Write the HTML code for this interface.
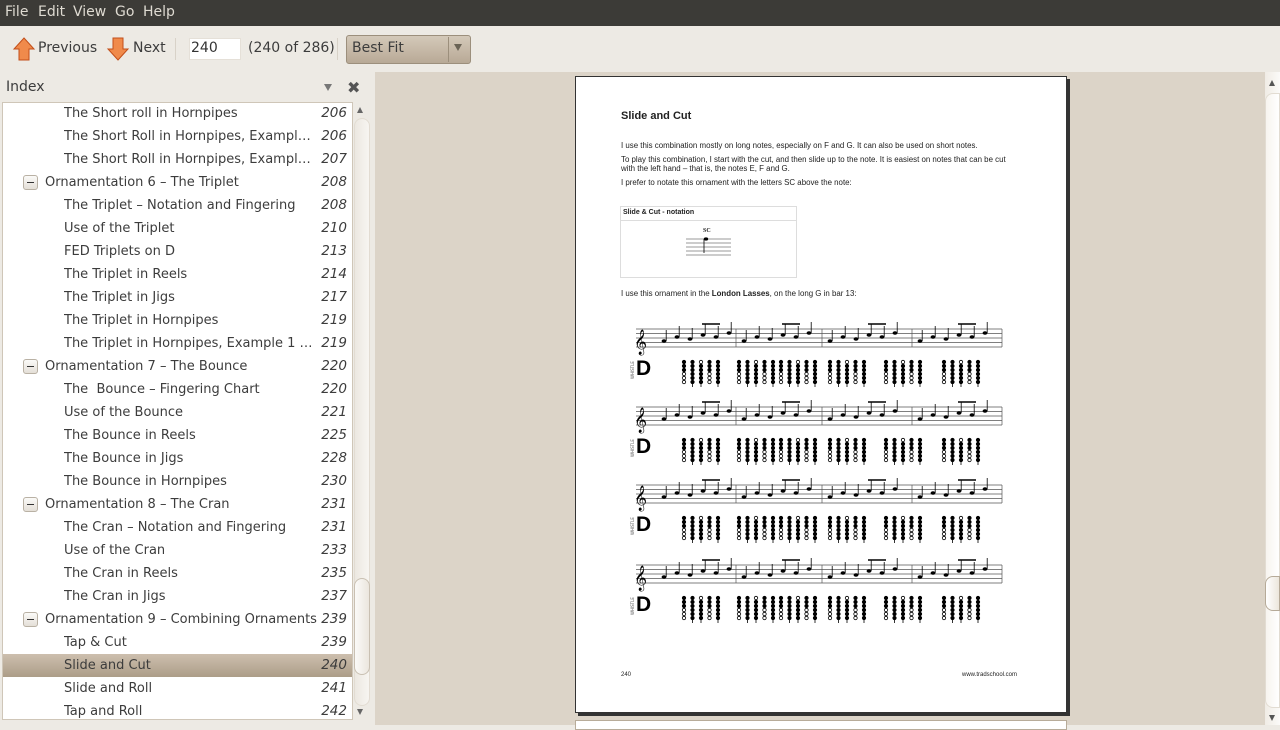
<!DOCTYPE html>
<html><head><meta charset="utf-8"><style>
*{margin:0;padding:0;box-sizing:border-box}
body{width:1280px;height:725px;overflow:hidden;background:#edeae4;font-family:"DejaVu Sans","Liberation Sans",sans-serif;font-size:14px;color:#3c3c3c;position:relative}
.abs{position:absolute}
#menu{left:0;top:0;width:1280px;height:26px;background:#3c3b37;color:#dfdbd2;font-size:14px}
#menu span{position:absolute;top:4px}
.tb{font-size:14px;color:#3c3c3c;top:40px}
#tree{left:2px;top:102px;width:351px;height:618px;background:#fff;border:1px solid #cfc6b8;overflow:hidden}
.row{position:absolute;left:0;width:349px;height:23px;line-height:23px;font-size:13px;color:#3c3c3c}
.row .t{position:absolute;left:61px;white-space:nowrap;max-width:253px;overflow:hidden;text-overflow:ellipsis}
.row.p .t{left:42px;max-width:290px}
.row .n{position:absolute;right:5px;font-style:italic;font-size:13.5px}
.row.sel{background:linear-gradient(#cdbfae,#ac9d88);}
.exp{position:absolute;left:20px;top:4px;width:15px;height:15px;border:1px solid #b9b1a4;border-radius:3px;background:linear-gradient(#fbfaf8,#e4dfd7)}
.exp:after{content:"";position:absolute;left:3px;top:6px;width:7px;height:1px;background:#333}
#doc{left:375px;top:72px;width:890px;height:653px;background:#dcd4c8}
#page{left:575px;top:76px;width:492px;height:637px;background:#fff;border:1px solid #333;box-shadow:3px 3px 0 #333}
.pt{position:absolute;font-family:"Liberation Sans",sans-serif;color:#222}
</style></head><body>
<div id="menu" class="abs"><span style="left:5px">File</span><span style="left:38px">Edit</span><span style="left:73px">View</span><span style="left:115px">Go</span><span style="left:143px">Help</span></div>

<svg class="abs" style="left:12px;top:37px" width="24" height="25"><path d="M12 1 L22 12 H17 V23 H7 V12 H2 Z" fill="#f08a4b" stroke="#c24f1a" stroke-width="1"/></svg>
<div class="abs tb" style="left:38px">Previous</div>
<svg class="abs" style="left:106px;top:37px" width="24" height="25"><path d="M12 23 L22 12 H17 V1 H7 V12 H2 Z" fill="#f08a4b" stroke="#c24f1a" stroke-width="1"/></svg>
<div class="abs tb" style="left:133px">Next</div>
<div class="abs" style="left:175px;top:38px;width:1px;height:22px;background:#d8d2c8"></div>
<div class="abs" style="left:189px;top:38px;width:52px;height:22px;background:#fff;border:1px solid #e5e0d8;padding:1px 0 0 1px;font-size:14px;color:#333">240</div>
<div class="abs tb" style="left:248px">(240 of 286)</div>
<div class="abs" style="left:337px;top:38px;width:1px;height:22px;background:#d8d2c8"></div>
<div class="abs" style="left:346px;top:35px;width:125px;height:29px;border:1px solid #9c8f7c;border-radius:3px;background:linear-gradient(#d4c9b9,#b8a996)"></div>
<div class="abs tb" style="left:352px;top:40px">Best Fit</div>
<div class="abs" style="left:448px;top:37px;width:1px;height:25px;background:#9c8f7c"></div>
<div class="abs" style="left:454px;top:44px;width:0;height:0;border-left:4px solid transparent;border-right:4px solid transparent;border-top:7px solid #6a6355"></div>

<div class="abs" style="left:6px;top:79px;font-size:14px">Index</div>
<div class="abs" style="left:324px;top:84px;border-left:4px solid transparent;border-right:4px solid transparent;border-top:7px solid #777"></div>
<div class="abs" style="left:347px;top:78px;font-size:16px;font-weight:bold;color:#555">✖</div>

<div id="tree" class="abs">
<div class="row" style="top:-1px"><span class="t">The Short roll in Hornpipes</span><span class="n">206</span></div>
<div class="row" style="top:22px"><span class="t">The Short Roll in Hornpipes, Example 1</span><span class="n">206</span></div>
<div class="row" style="top:45px"><span class="t">The Short Roll in Hornpipes, Example 2</span><span class="n">207</span></div>
<div class="row p" style="top:68px"><span class="exp"></span><span class="t">Ornamentation 6 – The Triplet</span><span class="n">208</span></div>
<div class="row" style="top:91px"><span class="t">The Triplet – Notation and Fingering</span><span class="n">208</span></div>
<div class="row" style="top:114px"><span class="t">Use of the Triplet</span><span class="n">210</span></div>
<div class="row" style="top:137px"><span class="t">FED Triplets on D</span><span class="n">213</span></div>
<div class="row" style="top:160px"><span class="t">The Triplet in Reels</span><span class="n">214</span></div>
<div class="row" style="top:183px"><span class="t">The Triplet in Jigs</span><span class="n">217</span></div>
<div class="row" style="top:206px"><span class="t">The Triplet in Hornpipes</span><span class="n">219</span></div>
<div class="row" style="top:229px"><span class="t">The Triplet in Hornpipes, Example 1 and 2</span><span class="n">219</span></div>
<div class="row p" style="top:252px"><span class="exp"></span><span class="t">Ornamentation 7 – The Bounce</span><span class="n">220</span></div>
<div class="row" style="top:275px"><span class="t">The &nbsp;Bounce – Fingering Chart</span><span class="n">220</span></div>
<div class="row" style="top:298px"><span class="t">Use of the Bounce</span><span class="n">221</span></div>
<div class="row" style="top:321px"><span class="t">The Bounce in Reels</span><span class="n">225</span></div>
<div class="row" style="top:344px"><span class="t">The Bounce in Jigs</span><span class="n">228</span></div>
<div class="row" style="top:367px"><span class="t">The Bounce in Hornpipes</span><span class="n">230</span></div>
<div class="row p" style="top:390px"><span class="exp"></span><span class="t">Ornamentation 8 – The Cran</span><span class="n">231</span></div>
<div class="row" style="top:413px"><span class="t">The Cran – Notation and Fingering</span><span class="n">231</span></div>
<div class="row" style="top:436px"><span class="t">Use of the Cran</span><span class="n">233</span></div>
<div class="row" style="top:459px"><span class="t">The Cran in Reels</span><span class="n">235</span></div>
<div class="row" style="top:482px"><span class="t">The Cran in Jigs</span><span class="n">237</span></div>
<div class="row p" style="top:505px"><span class="exp"></span><span class="t">Ornamentation 9 – Combining Ornaments</span><span class="n">239</span></div>
<div class="row" style="top:528px"><span class="t">Tap &amp; Cut</span><span class="n">239</span></div>
<div class="row sel" style="top:551px"><span class="t">Slide and Cut</span><span class="n">240</span></div>
<div class="row" style="top:574px"><span class="t">Slide and Roll</span><span class="n">241</span></div>
<div class="row" style="top:597px"><span class="t">Tap and Roll</span><span class="n">242</span></div>
</div>
<!-- left scrollbar -->
<div class="abs" style="left:357px;top:107px;border-left:3px solid transparent;border-right:3px solid transparent;border-bottom:6px solid #666"></div>
<div class="abs" style="left:354px;top:118px;width:16px;height:588px;border-radius:8px;background:linear-gradient(90deg,#ece8e1,#f7f5f1);border:1px solid #e2dcd2"></div>
<div class="abs" style="left:354px;top:578px;width:16px;height:97px;border-radius:8px;background:linear-gradient(90deg,#fbfaf8,#ebe6de);border:1px solid #c9c0b2"></div>
<div class="abs" style="left:357px;top:709px;border-left:3px solid transparent;border-right:3px solid transparent;border-top:6px solid #666"></div>

<div id="doc" class="abs"></div>
<div class="abs" style="left:1265px;top:72px;width:15px;height:653px;background:linear-gradient(90deg,#f0ece5,#fbfaf8)"></div>
<div class="abs" style="left:1269px;top:80px;border-left:3px solid transparent;border-right:3px solid transparent;border-bottom:6px solid #555"></div>
<div class="abs" style="left:1265px;top:93px;width:15px;height:615px;border-radius:8px 0 0 8px;border:1px solid #e2dcd2;background:linear-gradient(90deg,#f7f4ef,#fff)"></div>
<div class="abs" style="left:1265px;top:576px;width:15px;height:35px;border-radius:8px 0 0 8px;border:1px solid #b6aa98;background:linear-gradient(90deg,#fff,#ece6dc)"></div>
<div class="abs" style="left:1269px;top:715px;border-left:3px solid transparent;border-right:3px solid transparent;border-top:6px solid #555"></div>

<div class="abs" style="left:575px;top:720px;width:492px;height:10px;background:#fff;border:1px solid #b8ac9a"></div>
<div id="page" class="abs">
<div class="pt" style="left:45px;top:33px;font-size:11px;font-weight:bold">Slide and Cut</div>
<div class="pt" style="left:45px;top:64px;font-size:7.9px">I use this combination mostly on long notes, especially on F and G. It can also be used on short notes.</div>
<div class="pt" style="left:45px;top:78px;font-size:7.9px;line-height:9px;width:398px">To play this combination, I start with the cut, and then slide up to the note. It is easiest on notes that can be cut with the left hand – that is, the notes E, F and G.</div>
<div class="pt" style="left:45px;top:101px;font-size:7.9px">I prefer to notate this ornament with the letters SC above the note:</div>
<div class="abs" style="left:44px;top:129px;width:177px;height:72px;border:1px solid #ddd"></div>
<div class="abs" style="left:44px;top:143px;width:177px;height:1px;background:#ddd"></div>
<div class="pt" style="left:47px;top:132px;font-size:7px;font-weight:bold">Slide &amp; Cut - notation</div>
<div class="pt" style="left:127px;top:151px;font-size:6px;font-weight:bold;font-family:'Liberation Serif',serif">SC</div>
<svg class="abs" style="left:110px;top:158px" width="46" height="24"><g stroke="#777" stroke-width="0.8"><line x1="0" y1="4" x2="45" y2="4"/><line x1="0" y1="8" x2="45" y2="8"/><line x1="0" y1="12" x2="45" y2="12"/><line x1="0" y1="16" x2="45" y2="16"/><line x1="0" y1="20" x2="45" y2="20"/></g><ellipse cx="20" cy="4" rx="2.2" ry="1.6" fill="#000"/><line x1="18" y1="4" x2="18" y2="18" stroke="#000" stroke-width="0.8"/></svg>
<div class="pt" style="left:45px;top:212px;font-size:7.9px">I use this ornament in the <b>London Lasses</b>, on the long G in bar 13:</div>

<svg class="abs" style="left:50px;top:240px" width="380" height="320">
<defs>
<g id="c1" stroke="#000" stroke-width="0.8"><circle cx="0" cy="2" r="1.7"/><circle cx="0" cy="6" r="1.7"/><circle cx="0" cy="10" r="1.7"/><circle cx="0" cy="14" r="1.7" fill="#fff"/><circle cx="0" cy="18" r="1.7" fill="#fff"/><circle cx="0" cy="22" r="1.7" fill="#fff"/></g>
<g id="c2" stroke="#000" stroke-width="0.8"><circle cx="0" cy="2" r="1.7"/><circle cx="0" cy="6" r="1.7"/><circle cx="0" cy="10" r="1.7"/><circle cx="0" cy="14" r="1.7"/><circle cx="0" cy="18" r="1.7"/><circle cx="0" cy="22" r="1.7"/><line x1="0" y1="24" x2="0" y2="27"/></g>
<g id="c3" stroke="#000" stroke-width="0.8"><circle cx="0" cy="2" r="1.7" fill="#fff"/><circle cx="0" cy="6" r="1.7"/><circle cx="0" cy="10" r="1.7"/><circle cx="0" cy="14" r="1.7"/><circle cx="0" cy="18" r="1.7"/><circle cx="0" cy="22" r="1.7"/><line x1="0" y1="24" x2="0" y2="27"/></g>
<g id="grp"><use href="#c1" x="0"/><use href="#c2" x="8.5"/><use href="#c3" x="17"/><use href="#c1" x="25.5"/><use href="#c2" x="34"/></g>
<g id="n"><ellipse cx="0" cy="0" rx="2.4" ry="1.8" fill="#000"/><line x1="2.2" y1="0" x2="2.2" y2="-11" stroke="#000" stroke-width="0.8"/></g>
<g id="ng"><use href="#n" x="0" y="12"/><use href="#n" x="13" y="8"/><use href="#n" x="26" y="10"/><use href="#n" x="39" y="6"/><use href="#n" x="52" y="8"/><use href="#n" x="65" y="4"/><line x1="38" y1="-5" x2="56" y2="-5" stroke="#000" stroke-width="1.5"/></g>
<g id="staff"><g stroke="#555" stroke-width="0.7"><line x1="0" y1="0" x2="366" y2="0"/><line x1="0" y1="4.5" x2="366" y2="4.5"/><line x1="0" y1="9" x2="366" y2="9"/><line x1="0" y1="13.5" x2="366" y2="13.5"/><line x1="0" y1="18" x2="366" y2="18"/><line x1="100" y1="0" x2="100" y2="18"/><line x1="186" y1="0" x2="186" y2="18"/><line x1="276" y1="0" x2="276" y2="18"/><line x1="366" y1="0" x2="366" y2="18"/></g><text x="-2" y="20" font-size="22" font-family="DejaVu Sans">𝄞</text><use href="#ng" x="28" y="0"/><use href="#ng" x="108" y="0"/><use href="#ng" x="194" y="0"/><use href="#ng" x="284" y="0"/></g>
<g id="whistle"><text x="0" y="0" font-size="4" fill="#555" transform="translate(-2 50) rotate(-90)">WHISTLE</text><text x="0" y="46" font-size="21" font-weight="bold" font-family="Liberation Sans">D</text><use href="#grp" x="48" y="31"/><use href="#grp" x="103" y="31"/><use href="#grp" x="145" y="31"/><use href="#grp" x="194" y="31"/><use href="#grp" x="250" y="31"/><use href="#grp" x="308" y="31"/></g>
</defs>
<use href="#staff" x="10" y="12"/><use href="#whistle" x="10" y="12"/>
<use href="#staff" x="10" y="90"/><use href="#whistle" x="10" y="90"/>
<use href="#staff" x="10" y="168"/><use href="#whistle" x="10" y="168"/>
<use href="#staff" x="10" y="248"/><use href="#whistle" x="10" y="248"/>
</svg>
<div class="pt" style="left:45px;top:595px;font-size:6px">240</div>
<div class="pt" style="left:386px;top:595px;font-size:6px">www.tradschool.com</div>
</div>
</body></html>
